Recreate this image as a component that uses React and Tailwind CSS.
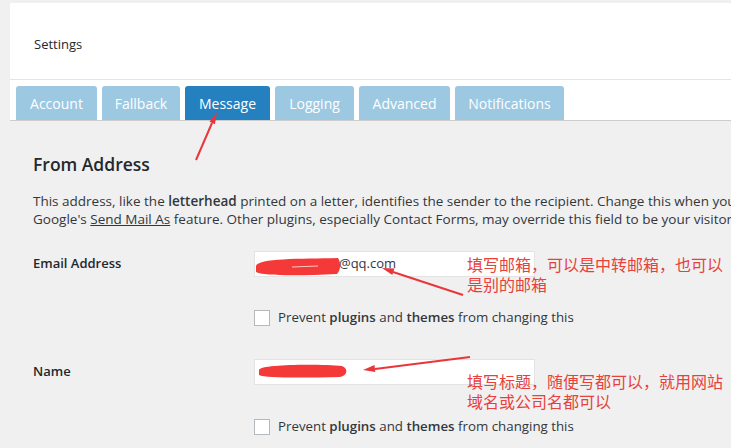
import React from "react";

const tabs = [
  { label: "Account", w: "w-[81px]" },
  { label: "Fallback", w: "w-[78px]" },
  { label: "Message", w: "w-[85px]", active: true },
  { label: "Logging", w: "w-[79px]" },
  { label: "Advanced", w: "w-[91px]" },
  { label: "Notifications", w: "w-[109px]" },
];

function Prevent() {
  return (
    <div className="flex items-center pl-[221px]">
      <span className="w-[16px] h-[16px] bg-white border border-[#b4b9be] shrink-0" />
      <span className="ml-[8px] text-[13.3px] text-[#32373c] whitespace-nowrap">
        Prevent <b className="font-semibold">plugins</b> and{" "}
        <b className="font-semibold">themes</b> from changing this
      </span>
    </div>
  );
}

export default function App() {
  return (
    <div
      className="relative w-[731px] h-[448px] overflow-hidden bg-[#f0f0f0] text-[#23282d] pt-[3px]"
      style={{ fontFamily: '"Open Sans", "Noto Sans CJK SC", sans-serif' }}
    >
      <div className="ml-[10px] bg-white">
        <div className="h-[77px] flex items-center pl-[24px] pt-[8px] text-[13px] border-b border-[#e5e5e5]">
          Settings
        </div>
        <div className="h-[41px] flex items-end pl-[6px] gap-[5px] border-b border-[#cccccc]">
          {tabs.map((t) => (
            <div
              key={t.label}
              className={`${t.w} h-[34px] flex items-center justify-center rounded-t-[3px] text-[14px] text-white ${
                t.active ? "bg-[#2580c0]" : "bg-[#9cc8e2]"
              }`}
            >
              {t.label}
            </div>
          ))}
        </div>
      </div>

      <div className="pl-[33px]">
        <h2 className="mt-[31px] text-[17.5px] leading-[24px] font-semibold text-[#23282d]">
          From Address
        </h2>
        <p className="mt-[16px] text-[13.5px] leading-[18px] text-[#32373c] whitespace-nowrap">
          This address, like the <b className="font-semibold">letterhead</b> printed on a letter,
          identifies the sender to the recipient. Change this when you are sending on behalf of
          someone else
          <br />
          Google's <span className="underline">Send Mail As</span> feature. Other plugins,
          especially Contact Forms, may override this field to be your visitor's address.
        </p>

        <div className="mt-[23px] flex items-center">
          <div className="w-[221px] text-[13px] font-semibold">Email Address</div>
          <div className="w-[281px] h-[26px] bg-white border border-[#e3e3e3] flex items-center pl-[84px] text-[13px] text-[#32373c]">
            @qq.com
          </div>
        </div>
        <div className="mt-[31px]">
          <Prevent />
        </div>

        <div className="mt-[31px] flex items-center">
          <div className="w-[221px] text-[13px] font-semibold">Name</div>
          <div className="w-[281px] h-[26px] bg-white border border-[#e3e3e3]" />
        </div>
        <div className="mt-[32px]">
          <Prevent />
        </div>
      </div>

      <svg className="absolute inset-0 pointer-events-none" width="731" height="448">
        <path d="M256 266 C258 258 300 259 338 258 C341 262 341 270 337 274 C300 276 262 276 256 272 Z" fill="#f53838" />
        <path d="M292 267 L318 266" stroke="#ffc8c8" strokeWidth="1" />
        <path d="M259 370 C260 364 320 364 342 366 C349 369 347 376 340 377 C300 378 265 378 259 375 Z" fill="#f53838" />
        <g stroke="#e8363a" strokeWidth="2" fill="#e8363a">
          <line x1="196" y1="160" x2="212" y2="123" />
          <polygon points="217,112 214.9,124.2 209.5,121.8" stroke="none" />
          <line x1="463" y1="295" x2="393" y2="272" />
          <polygon points="382,268 394.5,268.5 392.3,275.1" stroke="none" />
          <line x1="470" y1="357" x2="375" y2="369" />
          <polygon points="363,370 375.3,372 374.5,365" stroke="none" />
        </g>
      </svg>

      <div className="absolute left-[467px] top-[255px] text-[16px] leading-[20px] text-[#e8403a] whitespace-nowrap">
        填写邮箱，可以是中转邮箱，也可以
        <br />
        是别的邮箱
      </div>
      <div className="absolute left-[467px] top-[372px] text-[16px] leading-[20px] text-[#e8403a] whitespace-nowrap">
        填写标题，随便写都可以，就用网站
        <br />
        域名或公司名都可以
      </div>
    </div>
  );
}
